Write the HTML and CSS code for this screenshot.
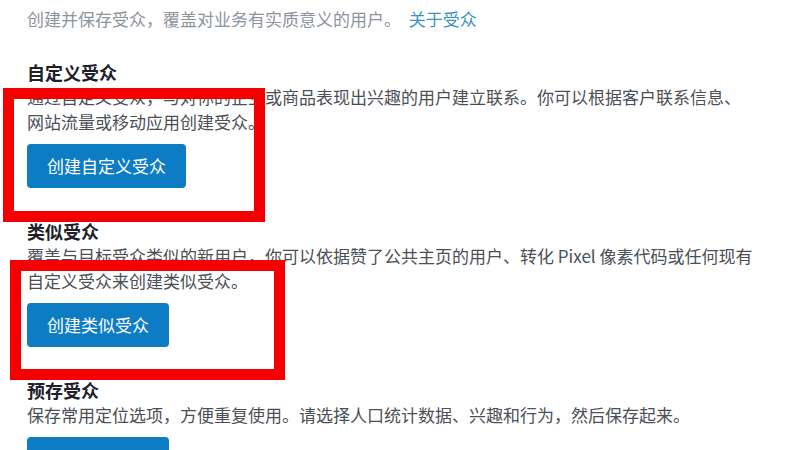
FILE: index.html
```html
<!DOCTYPE html>
<html lang="zh-CN">
<head>
<meta charset="utf-8">
<title>受众</title>
<link rel="stylesheet" href="styles.css">
</head>
<body>
<main class="page">
  <p class="intro">创建并保存受众，覆盖对业务有实质意义的用户。 <a class="link" href="#">关于受众</a></p>

  <section class="block">
    <h2 class="title">自定义受众</h2>
    <p class="desc">通过自定义受众，与对你的企业或商品表现出兴趣的用户建立联系。你可以根据客户联系信息、网站流量或移动应用创建受众。</p>
    <button class="btn">创建自定义受众</button>
  </section>

  <section class="block">
    <h2 class="title">类似受众</h2>
    <p class="desc">覆盖与目标受众类似的新用户，你可以依据赞了公共主页的用户、转化 Pixel 像素代码或任何现有自定义受众来创建类似受众。</p>
    <button class="btn">创建类似受众</button>
  </section>

  <section class="block">
    <h2 class="title">预存受众</h2>
    <p class="desc">保存常用定位选项，方便重复使用。请选择人口统计数据、兴趣和行为，然后保存起来。</p>
    <button class="btn">创建预存受众</button>
  </section>

  <div class="mark mark-one"></div>
  <div class="mark mark-two"></div>
</main>
</body>
</html>
```

FILE: styles.css
```css
* { box-sizing: border-box; }

html, body {
  margin: 0;
  padding: 0;
  background: #ffffff;
  overflow: hidden;
}

body {
  font-family: "Noto Sans CJK SC", "Noto Sans", sans-serif;
  font-size: 17px;
  color: #4b4f56;
}

.page {
  position: relative;
  width: 800px;
  height: 450px;
  padding: 6px 0 0 27px;
}

.intro {
  margin: 0;
  line-height: 25px;
  color: #8d949e;
}

.link {
  margin-left: 4px;
  color: #3a93c6;
  text-decoration: none;
}

.block {
  display: flex;
  flex-direction: column;
  align-items: flex-start;
  width: 728px;
}

.block:first-of-type { margin-top: 29px; }
.block + .block { margin-top: 31px; }

.title {
  margin: 0;
  font-size: 18px;
  font-weight: 700;
  line-height: 24px;
  color: #1d2129;
}

.desc {
  margin: 0;
  line-height: 25px;
}

.btn {
  margin-top: 10px;
  height: 44px;
  padding: 0 20px;
  border: none;
  border-radius: 4px;
  background: #0c7cc4;
  color: #ffffff;
  font-family: inherit;
  font-size: 17px;
  line-height: 44px;
}

.mark {
  position: absolute;
  border: 11px solid #f40000;
}

.mark-one {
  left: 3px;
  top: 88px;
  width: 262px;
  height: 134px;
}

.mark-two {
  left: 10px;
  top: 260px;
  width: 275px;
  height: 120px;
}
```
